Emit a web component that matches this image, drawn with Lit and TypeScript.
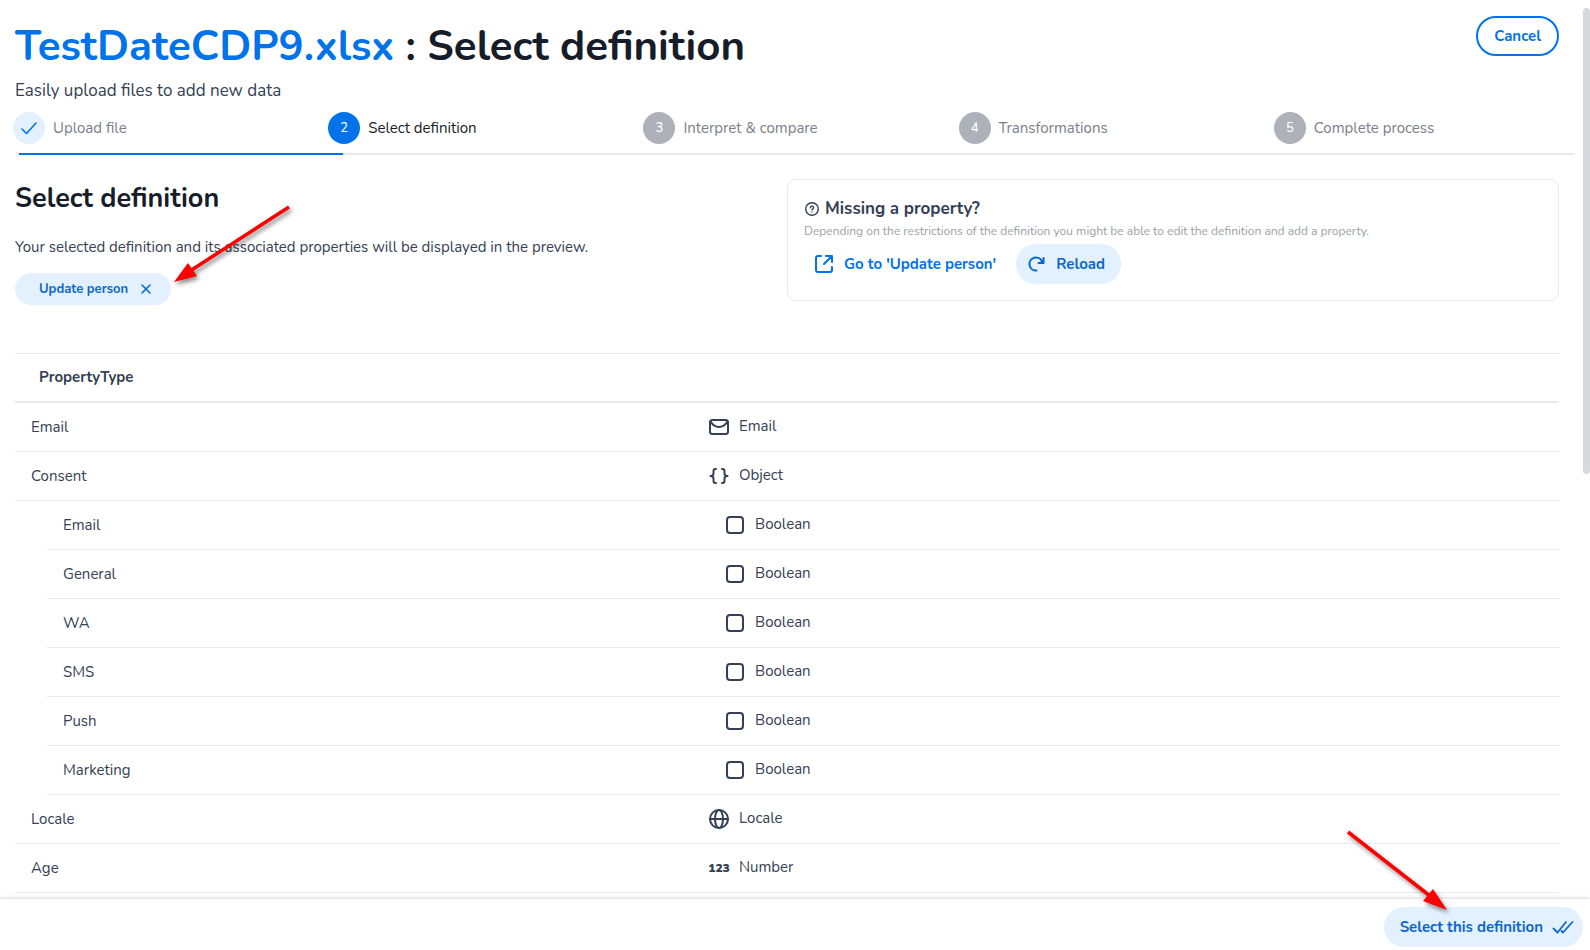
import { LitElement, html, svg, css } from 'lit';
import { customElement } from 'lit/decorators.js';
import { classMap } from 'lit/directives/class-map.js';

type Kind = 'email' | 'object' | 'boolean' | 'locale' | 'number';

interface Property {
  name: string;
  kind: Kind;
  label: string;
  nested?: boolean;
}

const STEPS = ['Upload file', 'Select definition', 'Interpret & compare', 'Transformations', 'Complete process'];
const CURRENT = 1;

const PROPERTIES: Property[] = [
  { name: 'Email', kind: 'email', label: 'Email' },
  { name: 'Consent', kind: 'object', label: 'Object' },
  { name: 'Email', kind: 'boolean', label: 'Boolean', nested: true },
  { name: 'General', kind: 'boolean', label: 'Boolean', nested: true },
  { name: 'WA', kind: 'boolean', label: 'Boolean', nested: true },
  { name: 'SMS', kind: 'boolean', label: 'Boolean', nested: true },
  { name: 'Push', kind: 'boolean', label: 'Boolean', nested: true },
  { name: 'Marketing', kind: 'boolean', label: 'Boolean', nested: true },
  { name: 'Locale', kind: 'locale', label: 'Locale' },
  { name: 'Age', kind: 'number', label: 'Number' },
];

const GLYPHS = {
  email: svg`<rect x="3" y="5" width="18" height="14" rx="2.500"/><path d="M3.500 6.500C6 10.500 9 12 12 12s6-1.500 8.500-5.500"/>`,
  object: svg`<path d="M9 5H8.500Q6.500 5 6.500 7v2.500Q6.500 12 3.500 12q3 0 3 2.500V17q0 2 2 2H9M15 5h.5q2 0 2 2v2.500Q17.500 12 20.500 12q-3 0-3 2.500V17q0 2-2 2H15"/>`,
  boolean: svg`<rect x="4" y="4" width="16" height="16" rx="3"/>`,
  locale: svg`<circle cx="12" cy="12" r="9"/><ellipse cx="12" cy="12" rx="4" ry="9"/><path d="M3 12h18"/>`,
};

@customElement('app-root')
export class AppRoot extends LitElement {
  static styles = css`
    :host {
      display: flex;
      flex-direction: column;
      height: 100vh;
      overflow: hidden;
      position: relative;
      background: #fff;
      color: #344054;
      font-family: Nunito, Lato, sans-serif;
      font-size: 15px;
      line-height: 20px;
    }
    * { box-sizing: border-box; }
    h1, h2, h3, p, ol { margin: 0; padding: 0; }
    svg { display: block; flex: none; }
    button { font: inherit; font-weight: 700; border: 0; cursor: pointer; }
    .stroke { fill: none; stroke: currentColor; stroke-width: 2; stroke-linecap: round; stroke-linejoin: round; }

    .view { flex: 1; min-height: 0; overflow: hidden; }
    .head { display: flex; align-items: flex-start; justify-content: space-between; padding: 16px 31px 0 15px; }
    .title { font-size: 42px; line-height: 62px; font-weight: 700; color: #161d29; }
    .file { color: #0073ea; }
    .lead { font-size: 17px; line-height: 26px; }
    .pill { display: flex; align-items: center; height: 40px; border-radius: 20px; }
    .outline { padding: 0 16px; background: #fff; color: #0073ea; border: 2px solid #0073ea; }
    .soft { background: #e3f1ff; color: #0b67cd; }

    .steps { display: grid; grid-template-columns: repeat(5, 1fr); list-style: none; padding: 8px 1px 9px 13px; }
    .step { display: flex; align-items: center; gap: 8px; color: #7a808a; }
    .dot {
      display: grid; place-items: center; width: 32px; height: 32px; border-radius: 50%;
      background: #adb1ba; color: #fff; font-size: 13px; font-weight: 500;
    }
    .done .dot { background: #e3f1ff; color: #0073ea; }
    .current { color: #161d29; }
    .current .dot { background: #0073ea; }
    .track { height: 2px; margin: 0 15px 0 19px; background: #e8e8ed; }
    .fill { height: 2px; background: #0073ea; }

    .intro { display: grid; grid-template-columns: 1fr 1fr; align-items: start; padding: 24px 31px 0 15px; }
    .subtitle { font-size: 27px; line-height: 40px; font-weight: 700; color: #161d29; }
    .note { padding-top: 18px; padding-bottom: 16px; }
    .chip {
      display: flex; align-items: center; gap: 10px; height: 32px; padding: 0 17px 0 24px;
      border-radius: 16px; font-size: 13px;
    }
    .card { border: 1px solid #e8e9eb; border-radius: 8px; padding: 17px 16px 16px; }
    .question { display: flex; align-items: center; gap: 5px; font-size: 17px; line-height: 24px; font-weight: 700; }
    .hint { font-size: 12px; line-height: 21px; padding-bottom: 2px; color: #9a9fa6; }
    .actions { display: flex; align-items: center; gap: 20px; }
    .link { display: flex; align-items: center; gap: 8px; padding-left: 8px; color: #0073ea; font-weight: 700; text-decoration: none; }
    .reload { padding: 0 16px 0 8px; gap: 8px; }

    table { display: block; margin: 48px 31px 0 15px; border-top: 1px solid #e8e9eb; }
    thead, tbody { display: block; }
    tr { display: grid; grid-template-columns: calc(50% - 80px) 1fr; align-items: center; height: 49px; border-bottom: 1px solid #e8e9eb; }
    th, td { padding: 0; text-align: left; }
    th { padding-left: 24px; padding-bottom: 2px; font-weight: 700; }
    .header { border-bottom: 2px solid #e8e8ed; }
    .name { padding-left: 16px; }
    .nested { margin-left: 32px; }
    .type { display: flex; align-items: center; gap: 8px; }
    .kind { padding-bottom: 2px; }
    .digits { width: 24px; text-align: center; font-size: 12px; font-weight: 900; }

    .footer {
      display: flex; justify-content: flex-end; padding: 8px 7px 3px; background: #fff;
      box-shadow: 0 -1px 4px rgba(0, 0, 0, .16); z-index: 1;
    }
    .confirm { padding: 0 8px 0 16px; gap: 8px; }

    .thumb { position: absolute; right: 0; top: 8px; width: 7px; height: 49%; border-radius: 4px; background: #d6dadf; }
    .arrow { position: absolute; z-index: 2; pointer-events: none; filter: drop-shadow(2px 3px 2px rgba(0, 0, 0, .45)); }
    .one { left: 170px; top: 200px; }
    .two { right: 133px; bottom: 30px; }
  `;

  private icon(kind: Kind) {
    if (kind === 'number') return html`<span class="digits">123</span>`;
    return html`<svg class="stroke" width="24" height="24" viewBox="0 0 24 24" aria-hidden="true">${GLYPHS[kind]}</svg>`;
  }

  private step(label: string, i: number) {
    return html`<li class=${classMap({ step: true, done: i < CURRENT, current: i === CURRENT })}>
      <span class="dot">${i < CURRENT
        ? html`<svg class="stroke" width="24" height="24" viewBox="0 0 24 24" aria-label="Done"><path stroke-width="1.600" d="M5 13l4.500 4.500L19 7"/></svg>`
        : i + 1}</span>
      <span>${label}</span>
    </li>`;
  }

  private row(p: Property) {
    return html`<tr class=${classMap({ nested: !!p.nested })}>
      <td class="name">${p.name}</td>
      <td class="type">${this.icon(p.kind)}<span class="kind">${p.label}</span></td>
    </tr>`;
  }

  render() {
    return html`
      <main class="view">
        <header class="head">
          <div>
            <h1 class="title"><span class="file">TestDateCDP9.xlsx</span> : Select definition</h1>
            <p class="lead">Easily upload files to add new data</p>
          </div>
          <button class="pill outline">Cancel</button>
        </header>

        <ol class="steps">${STEPS.map((s, i) => this.step(s, i))}</ol>
        <div class="track"><div class="fill" style="width:${(CURRENT / STEPS.length) * 104}%"></div></div>

        <section class="intro">
          <div>
            <h2 class="subtitle">Select definition</h2>
            <p class="note">Your selected definition and its associated properties will be displayed in the preview.</p>
            <button class="chip soft">
              Update person
              <svg class="stroke" width="16" height="16" viewBox="0 0 16 16" aria-hidden="true"><path stroke-width="1.600" d="M4 4l8 8M12 4l-8 8"/></svg>
            </button>
          </div>
          <aside class="card">
            <h3 class="question">
              <svg class="stroke" width="16" height="16" viewBox="0 0 16 16" aria-hidden="true">
                <g stroke-width="1.400"><circle cx="8" cy="8" r="6.300"/><path d="M6.400 6.700a1.600 1.500 0 1 1 2.500 1.200Q8 8.300 8 8.900M8 10.900v.1"/></g>
              </svg>
              Missing a property?
            </h3>
            <p class="hint">Depending on the restrictions of the definition you might be able to edit the definition and add a property.</p>
            <div class="actions">
              <a class="link" href="#update-person">
                <svg class="stroke" width="24" height="24" viewBox="0 0 24 24" aria-hidden="true"><path d="M9 4H6a2 2 0 0 0-2 2v12a2 2 0 0 0 2 2h12a2 2 0 0 0 2-2v-3M14 4h6v6M20 4l-8 8"/></svg>
                Go to 'Update person'
              </a>
              <button class="pill soft reload">
                <svg class="stroke" width="24" height="24" viewBox="0 0 24 24" aria-hidden="true"><path d="M12.500 18.500A6.500 6.500 0 1 1 18 9.500M19.500 6v5h-5"/></svg>
                Reload
              </button>
            </div>
          </aside>
        </section>

        <table>
          <thead><tr class="header"><th colspan="2">PropertyType</th></tr></thead>
          <tbody>${PROPERTIES.map((p) => this.row(p))}</tbody>
        </table>
      </main>

      <footer class="footer">
        <button class="pill soft confirm">
          Select this definition
          <svg class="stroke" width="24" height="24" viewBox="0 0 24 24" aria-hidden="true"><path stroke-width="1.800" d="M2.500 13.500l4 4L15 7M10.500 16l1.500 1.500L21.500 7"/></svg>
        </button>
      </footer>

      <div class="thumb"></div>
      <svg class="arrow one" width="124" height="90" viewBox="170 200 124 90" aria-hidden="true">
        <path d="M289 207L190 271" stroke="#f00" stroke-width="3.500"/><path d="M174 282L188 263L197 276Z" fill="#f00"/>
      </svg>
      <svg class="arrow two" width="117" height="90" viewBox="1340 830 117 90" aria-hidden="true">
        <path d="M1348 832L1430 896" stroke="#f00" stroke-width="3.500"/><path d="M1447 910L1433 889L1423 901Z" fill="#f00"/>
      </svg>
    `;
  }
}
